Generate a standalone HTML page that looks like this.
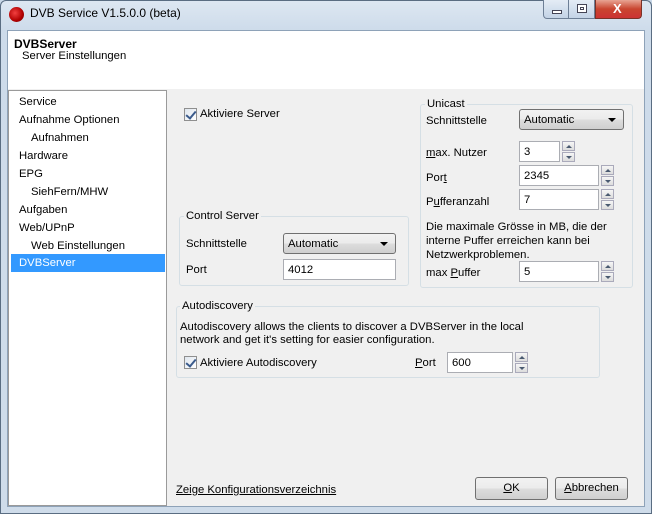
<!DOCTYPE html>
<html><head><meta charset="utf-8"><style>
*{margin:0;padding:0;box-sizing:border-box}
body{width:652px;height:514px;overflow:hidden;background:#c9d8e8;font-family:"Liberation Sans",sans-serif;font-size:11.3px;color:#000;position:relative}
.a{position:absolute}
.frame{left:0;top:0;width:652px;height:514px;border:1px solid #5a6d82;border-radius:6px 6px 0 0;background:linear-gradient(#dde7f2,#cddbea 30px,#cfdcea)}
.hdr{left:7px;top:30px;width:638px;height:60px;background:#fff;border:1px solid #8ea2b8}
.content{left:7px;top:89px;width:638px;height:418px;background:#f0f0f0;border:1px solid #8ea2b8;border-top:none}
.tree{left:8px;top:90px;width:159px;height:416px;background:#fff;border:1px solid #9a9a9a}
.ti{position:absolute;left:10px;height:18px;line-height:18px}
.grp{border:1px solid #d5dfe5;border-radius:3px}
.lg{position:absolute;background:#f0f0f0;padding:0 2px;top:-8px;left:4px;line-height:14px}
.tb{position:absolute;background:#fff;border:1px solid #abadb3;height:21px;line-height:20px;padding-left:4px}
.cb{position:absolute;border:1px solid #707070;border-radius:3px;height:21px;line-height:20px;padding-left:4px;background:linear-gradient(#f2f2f2,#ebebeb 50%,#dddddd 51%,#cfcfcf)}
.cb:after{content:"";position:absolute;right:7px;top:8px;border-left:4px solid transparent;border-right:4px solid transparent;border-top:4px solid #000}
.sp{position:absolute;width:13px;height:21px}
.sp i{display:block;height:10px;border:1px solid #aab;background:linear-gradient(#f6f6f6,#dcdcdc);margin-bottom:1px;position:relative}
.sp i:after{content:"";position:absolute;left:3px;top:3px;border-left:3px solid transparent;border-right:3px solid transparent}
.sp i.u:after{border-bottom:3px solid #4a5a70}
.sp i.d:after{border-top:3px solid #4a5a70}
.chk{position:absolute;width:13px;height:13px;border:1px solid #8f8f8f;background:linear-gradient(135deg,#dfe6ee,#fff)}
.chk:after{content:"";position:absolute;left:3px;top:0px;width:4px;height:8px;border:solid #3b5b8c;border-width:0 2px 2px 0;transform:rotate(40deg)}
.btn{position:absolute;border:1px solid #707070;border-radius:3px;text-align:center;line-height:21px;height:23px;background:linear-gradient(#f2f2f2,#ebebeb 50%,#dddddd 51%,#cfcfcf)}
u{text-decoration:underline}
</style></head><body>
<div class="a frame"></div>
<div class="a" style="left:9px;top:7px;width:15px;height:15px;border-radius:50%;background:radial-gradient(circle at 40% 40%,#f24040,#b00000 60%,#600)"></div>
<div class="a" style="left:30px;top:6px;font-size:12px;color:#000">DVB Service V1.5.0.0 (beta)</div>
<div class="a" style="left:543px;top:0;width:26px;height:19px;border:1px solid #6d7f96;border-top:none;border-radius:0 0 0 4px;background:linear-gradient(#e4ecf5,#c3d3e6)"><div class="a" style="left:8px;top:10px;width:10px;height:4px;background:#fff;border:1px solid #445"></div></div>
<div class="a" style="left:569px;top:0;width:26px;height:19px;border:1px solid #6d7f96;border-left:none;border-top:none;background:linear-gradient(#e4ecf5,#c3d3e6)"><div class="a" style="left:8px;top:4px;width:10px;height:9px;border:1px solid #445;background:#fff"><div class="a" style="left:2px;top:2px;width:4px;height:3px;border:1px solid #445"></div></div></div>
<div class="a" style="left:595px;top:0;width:47px;height:19px;border:1px solid #7a3228;border-top:none;border-radius:0 0 4px 0;background:linear-gradient(#e8a493,#c9452f 50%,#c33 )"><div class="a" style="left:17px;top:1px;color:#fff;font-weight:bold;font-size:13px">X</div></div>
<div class="a hdr"></div>
<div class="a" style="left:14px;top:37px;font-weight:bold;font-size:12px">DVBServer</div>
<div class="a" style="left:22px;top:50px">Server Einstellungen</div>
<div class="a content"></div>
<div class="a tree">
<div class="ti" style="top:2px">Service</div>
<div class="ti" style="top:20px">Aufnahme Optionen</div>
<div class="ti" style="top:38px;left:22px">Aufnahmen</div>
<div class="ti" style="top:56px">Hardware</div>
<div class="ti" style="top:74px">EPG</div>
<div class="ti" style="top:92px;left:22px">SiehFern/MHW</div>
<div class="ti" style="top:110px">Aufgaben</div>
<div class="ti" style="top:128px">Web/UPnP</div>
<div class="ti" style="top:146px;left:22px">Web Einstellungen</div>
<div style="position:absolute;left:2px;top:163px;width:154px;height:18px;background:#3399ff;color:#fff;line-height:18px;padding-left:8px">DVBServer</div>
</div>
<div class="chk" style="left:184px;top:108px"></div>
<div class="a" style="left:200px;top:108px">Aktiviere Server</div>
<div class="a grp" style="left:179px;top:216px;width:230px;height:70px"><div class="lg">Control Server</div></div>
<div class="a" style="left:186px;top:238px">Schnittstelle</div>
<div class="cb" style="left:283px;top:233px;width:113px">Automatic</div>
<div class="a" style="left:186px;top:264px">Port</div>
<div class="tb" style="left:283px;top:259px;width:113px">4012</div>
<div class="a grp" style="left:420px;top:104px;width:213px;height:184px"><div class="lg">Unicast</div></div>
<div class="a" style="left:426px;top:115px">Schnittstelle</div>
<div class="cb" style="left:519px;top:109px;width:105px">Automatic</div>
<div class="a" style="left:426px;top:147px"><u>m</u>ax. Nutzer</div>
<div class="tb" style="left:519px;top:141px;width:41px">3</div>
<div class="sp" style="left:562px;top:141px"><i class="u"></i><i class="d"></i></div>
<div class="a" style="left:426px;top:172px">Por<u>t</u></div>
<div class="tb" style="left:519px;top:165px;width:80px">2345</div>
<div class="sp" style="left:601px;top:165px"><i class="u"></i><i class="d"></i></div>
<div class="a" style="left:426px;top:196px">P<u>u</u>fferanzahl</div>
<div class="tb" style="left:519px;top:189px;width:80px">7</div>
<div class="sp" style="left:601px;top:189px"><i class="u"></i><i class="d"></i></div>
<div class="a" style="left:426px;top:220px;line-height:14px;width:205px">Die maximale Grösse in MB, die der interne Puffer erreichen kann bei Netzwerkproblemen.</div>
<div class="a" style="left:426px;top:267px">max <u>P</u>uffer</div>
<div class="tb" style="left:519px;top:261px;width:80px">5</div>
<div class="sp" style="left:601px;top:261px"><i class="u"></i><i class="d"></i></div>
<div class="a grp" style="left:176px;top:306px;width:424px;height:72px"><div class="lg" style="left:3px">Autodiscovery</div></div>
<div class="a" style="left:180px;top:321px;line-height:13px;width:345px">Autodiscovery allows the clients to discover a DVBServer in the local network and get it's setting for easier configuration.</div>
<div class="chk" style="left:184px;top:356px"></div>
<div class="a" style="left:200px;top:357px">Aktiviere Autodiscovery</div>
<div class="a" style="left:415px;top:357px"><u>P</u>ort</div>
<div class="tb" style="left:447px;top:352px;width:66px">600</div>
<div class="sp" style="left:515px;top:352px"><i class="u"></i><i class="d"></i></div>
<div class="a" style="left:176px;top:484px"><u>Zeige Konfigurationsverzeichnis</u></div>
<div class="btn" style="left:475px;top:477px;width:73px"><u>O</u>K</div>
<div class="btn" style="left:555px;top:477px;width:73px"><u>A</u>bbrechen</div>
</body></html>
